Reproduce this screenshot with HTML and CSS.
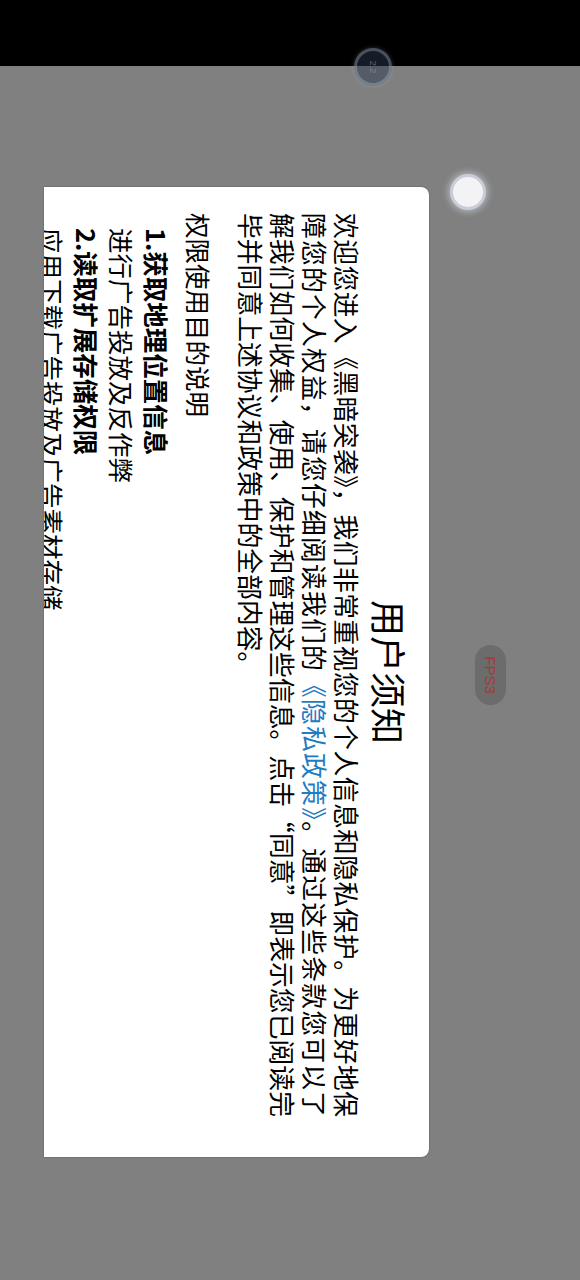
FILE: index.html
```html
<!DOCTYPE html>
<html lang="zh-CN">
<head>
    <meta charset="UTF-8">
    <meta name="viewport" content="width=device-width, initial-scale=1.0">
    <title>用户须知</title>
    <link rel="stylesheet" href="styles.css">
</head>
<body>
    <div class="screen">
        <div class="topbar"></div>
        <div class="stage"></div>

        <!-- the game runs in landscape, so the dialog is turned a quarter -->
        <div class="notice">
            <h1 class="notice-title">用户须知</h1>
            <div class="notice-body">
                <p class="intro">
                    <span class="row">欢迎您进入《黑暗突袭》，我们非常重视您的个人信息和隐私保护。为更好地保</span>
                    <span class="row">障您的个人权益，请您仔细阅读我们的<a class="link">《隐私政策》</a>。通过这些条款您可以了</span>
                    <span class="row">解我们如何收集、使用、保护和管理这些信息。点击“同意”即表示您已阅读完</span>
                    <span class="row last">毕并同意上述协议和政策中的全部内容。</span>
                </p>
                <p class="perm-head">权限使用目的说明</p>
                <ul class="perm-list">
                    <li><b>1.获取地理位置信息</b></li>
                    <li>进行广告投放及反作弊</li>
                    <li><b>2.读取扩展存储权限</b></li>
                    <li>应用下载广告投放及广告素材存储</li>
                </ul>
            </div>
        </div>

        <div class="float-btn"><span>2.2</span></div>
        <div class="ball"></div>
        <div class="fps">FPS3</div>
    </div>
</body>
</html>
```

FILE: styles.css
```css
html, body {
    margin: 0;
    padding: 0;
}

body {
    font-family: "Noto Sans CJK SC", "Noto Sans", sans-serif;
    background-color: #808080;
}

.screen {
    position: relative;
    width: 580px;
    height: 1280px;
    display: flex;
    flex-direction: column;
    overflow: hidden;
}

.topbar {
    height: 66px;
    background-color: #000;
}

.stage {
    flex: 1;
    background-color: #808080;
}

/* dialog, drawn in its own landscape frame then turned */
.notice {
    position: absolute;
    left: 429px;
    top: 187px;
    width: 970px;
    height: 385px;
    background-color: #fff;
    border-radius: 8px 8px 0 0;
    box-shadow: 0 0 2px rgba(0, 0, 0, 0.35);
    transform-origin: 0 0;
    transform: rotate(90deg);
    overflow: hidden;
    color: #000;
}

.notice-title {
    margin: 0;
    padding-top: 18px;
    font-size: 36px;
    line-height: 42px;
    font-weight: normal;
    text-align: center;
}

.notice-body {
    padding: 0 40px 0 26px;
}

.intro {
    margin: 6px 0 0 0;
    font-size: 25.8px;
    line-height: 32px;
}

.row {
    display: block;
    white-space: nowrap;
    text-align: justify;
    text-align-last: justify;
}

.row.last {
    text-align-last: left;
}

.link {
    color: #1f7cc2;
}

.perm-head {
    margin: 20px 0 0 0;
    font-size: 25.5px;
    line-height: 32px;
}

.perm-list {
    list-style: none;
    margin: 8px 0 0 0;
    padding: 0 0 0 15px;
    font-size: 25.5px;
    line-height: 35px;
    white-space: nowrap;
}

.perm-list b {
    font-weight: bold;
}

/* floating widgets over the game */
.float-btn {
    position: absolute;
    left: 354px;
    top: 48px;
    width: 32px;
    height: 32px;
    border-radius: 50%;
    background-color: rgba(40, 55, 80, 0.5);
    border: 3px solid rgba(200, 205, 215, 0.3);
    box-shadow: 0 0 4px rgba(200, 205, 215, 0.25);
    display: flex;
    align-items: center;
    justify-content: center;
}

.float-btn span {
    transform: rotate(90deg);
    font-family: "Liberation Sans", sans-serif;
    font-size: 9px;
    color: rgba(150, 160, 175, 0.6);
}

.ball {
    position: absolute;
    left: 450px;
    top: 174px;
    width: 30px;
    height: 30px;
    border-radius: 50%;
    background-color: #f3f3f5;
    border: 3px solid #c9ccd6;
    box-shadow: 0 0 6px 2px rgba(215, 220, 235, 0.55);
}

.fps {
    position: absolute;
    left: 506px;
    top: 645px;
    width: 60px;
    height: 31px;
    border-radius: 16px;
    background-color: #6c6c6c;
    transform-origin: 0 0;
    transform: rotate(90deg);
    font-family: "Liberation Sans", sans-serif;
    font-size: 15px;
    line-height: 31px;
    text-align: center;
    color: #a23a3a;
}
```
